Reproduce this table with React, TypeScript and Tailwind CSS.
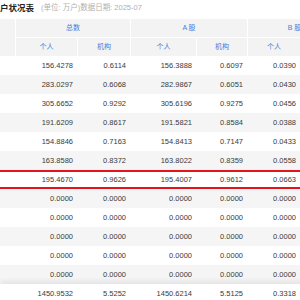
const cols = 'grid grid-cols-[15px_62px_53px_66px_51px_53px_41px]';

const rows: string[][] = [
  ['156.4278', '0.6114', '156.3888', '0.6097', '0.0390'],
  ['283.0297', '0.6068', '282.9867', '0.6051', '0.0430'],
  ['305.6652', '0.9292', '305.6196', '0.9275', '0.0456'],
  ['191.6209', '0.8617', '191.5821', '0.8584', '0.0388'],
  ['154.8846', '0.7163', '154.8413', '0.7147', '0.0433'],
  ['163.8580', '0.8372', '163.8022', '0.8359', '0.0558'],
  ['195.4670', '0.9626', '195.4007', '0.9612', '0.0663'],
  ['0.0000', '0.0000', '0.0000', '0.0000', '0.0000'],
  ['0.0000', '0.0000', '0.0000', '0.0000', '0.0000'],
  ['0.0000', '0.0000', '0.0000', '0.0000', '0.0000'],
  ['0.0000', '0.0000', '0.0000', '0.0000', '0.0000'],
  ['0.0000', '0.0000', '0.0000', '0.0000', '0.0000'],
];

const total = ['1450.9532', '5.5252', '1450.6214', '5.5125', '0.3318'];

function Row({ values, className }: { values: string[]; className: string }) {
  return (
    <div className={`${cols} h-[19px] items-center ${className}`}>
      <div />
      {values.map((v, i) => (
        <div key={i} className="pr-[4px] text-right">
          {v}
        </div>
      ))}
      <div />
    </div>
  );
}

export default function App() {
  return (
    <div className="w-[300px] h-[300px] overflow-hidden bg-white font-['Liberation_Sans','Noto_Sans_CJK_SC',sans-serif]">
      <div className="h-[19px] flex items-center gap-[7px] whitespace-nowrap pb-[3px]">
        <span className="text-[8.5px] font-bold text-[#222]">户状况表</span>
        <span className="text-[7.5px] text-[#b0b0b0]">(单位: 万户)数据日期: 2025-07</span>
      </div>

      <div className="w-[341px]">
        <div className={`${cols} grid-rows-[18px_18px] gap-y-px bg-white text-[7px] text-[#3f7fdc]`}>
          <div className="row-span-2 bg-[#f3f3f3]" />
          <div className="col-span-2 border-l border-white bg-[#f3f3f3] flex items-center justify-center">总数</div>
          <div className="col-span-2 border-l border-white bg-[#f3f3f3] flex items-center justify-center">A 股</div>
          <div className="col-span-2 border-l border-white bg-[#f3f3f3] flex items-center justify-center">B 股</div>
          <div className="border-l border-white bg-[#f3f3f3] flex items-center justify-center">个人</div>
          <div className="border-l border-white bg-[#f3f3f3] flex items-center justify-center">机构</div>
          <div className="border-l border-white bg-[#f3f3f3] flex items-center justify-center">个人</div>
          <div className="border-l border-white bg-[#f3f3f3] flex items-center justify-center">机构</div>
          <div className="border-l border-white bg-[#f3f3f3] flex items-center justify-center">个人</div>
          <div className="border-l border-white bg-[#f3f3f3]" />
        </div>

        <div className="text-[7.5px] text-[#3a3a3a]">
          {rows.map((r, i) => (
            <Row
              key={i}
              values={r}
              className={
                i === 6
                  ? 'bg-white border-y-2 border-[#e5131b]'
                  : i % 2 === 1
                    ? 'bg-[#f5f5f5]'
                    : 'bg-white'
              }
            />
          ))}
          <Row values={total} className="bg-white shadow-[0_-3px_5px_rgba(0,0,0,0.07)] relative" />
        </div>
      </div>
    </div>
  );
}
